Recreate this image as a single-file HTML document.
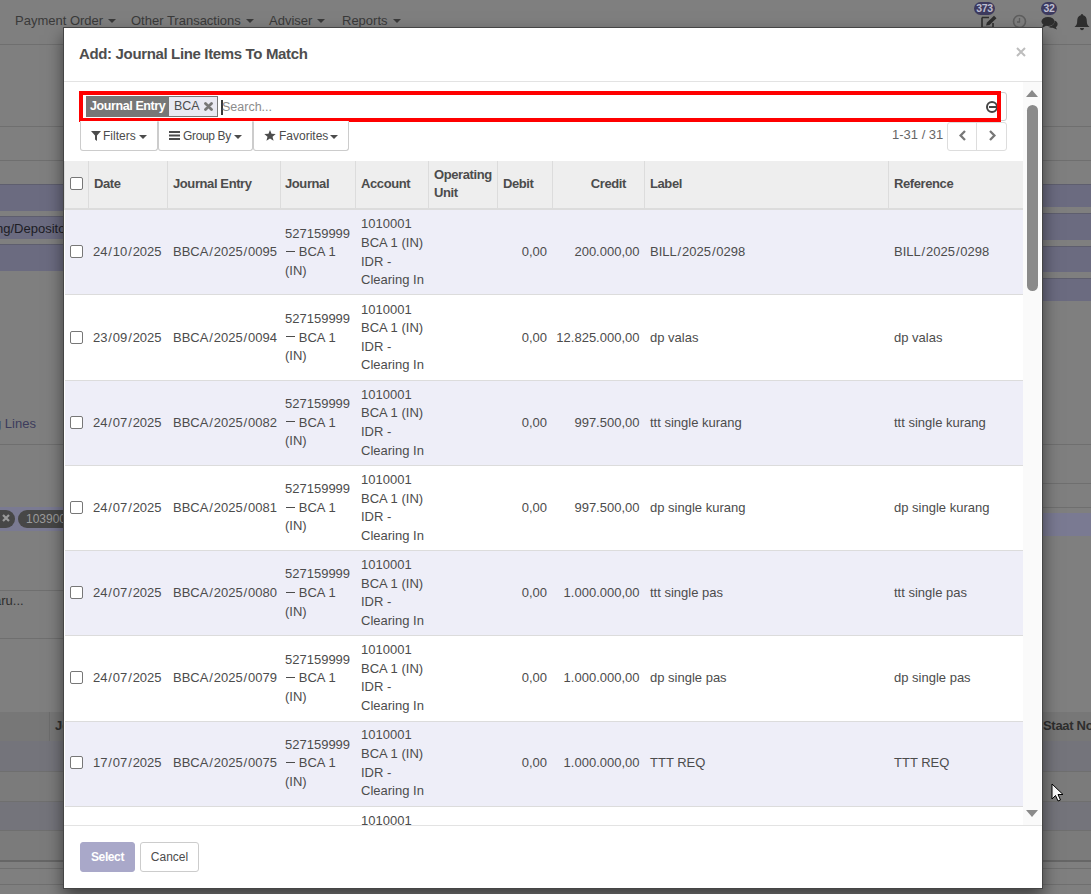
<!DOCTYPE html>
<html><head><meta charset="utf-8">
<style>
*{box-sizing:border-box;margin:0;padding:0}
html,body{width:1091px;height:894px;overflow:hidden}
body{position:relative;background:#7f7f7f;font-family:"Liberation Sans",sans-serif;font-size:13px;color:#4c4c4c;--odd:#eeeef8}
div,span,i,svg{position:absolute}
.bgline{left:0;width:1091px;height:1px;background:#6f6f6f}
.nav span{position:absolute;top:13px;color:#3a3a3a;font-size:13px;white-space:nowrap}
.caret{width:0;height:0;border-left:4px solid transparent;border-right:4px solid transparent;border-top:4px solid currentColor}
.nav .caret{position:relative;top:-1px;display:inline-block;vertical-align:middle;margin-left:5px;color:#3a3a3a}
.modal{left:63px;top:27px;width:980px;height:862px;background:#fff;border:1px solid #454545;box-shadow:0 8px 16px rgba(0,0,0,.5)}
.mhead{left:64px;top:81px;width:978px;height:1px;background:#e3e3e3}
.mtitle{left:79px;top:45px;letter-spacing:-0.35px;font-size:15px;font-weight:bold;color:#4e4e4e;white-space:nowrap}
.mclose{left:1016px;top:47px}
.bodyclip{left:0;top:0;width:1023px;height:825px;clip-path:inset(82px 0 0 64px)}
.row{left:65px;width:958px;border-bottom:1px solid #dcdcdc}
.t{white-space:nowrap;line-height:18.6px;font-size:13px;color:#4c4c4c}
.cb{width:13px;height:13px;border:1px solid #777;border-radius:2px;background:#fff}
.thead{left:64px;top:161px;width:959px;height:49px;background:#eee;border-left:1px solid #ddd;border-bottom:2px solid #dcdcdc}
.hd{top:161px;width:1px;height:47px;background:#dcdcdc}
.th{letter-spacing:-0.4px;white-space:nowrap;line-height:18.6px;font-weight:bold;color:#4c4c4c}
.sbox{left:80px;top:92px;width:927px;height:29px;border:1px solid #ccc;border-radius:3px;background:#fff}
.facet-l{left:86px;top:96px;width:83px;height:21px;background:#777;color:#fff;line-height:21px;padding-left:4px;white-space:nowrap;font-weight:bold;font-size:12.5px;letter-spacing:-0.4px}
.facet-v{left:169px;top:96px;width:49px;height:21px;background:#e9e9f2;border:1px solid #777;border-left:0;line-height:19px;padding-left:5px;white-space:nowrap;color:#4c4c4c;font-size:12.5px}
.fx{left:35px;top:5px}
.cursor{left:221px;top:100px;width:2px;height:15px;background:#3a3a3a}
.ph{left:222px;top:100px;color:#8c8c8c;line-height:15px;font-size:12.5px}
.clr{left:986px;top:101px;width:12px;height:12px;border:2px solid #444;border-radius:50%}
.clr:after{content:"";position:absolute;left:1px;top:3px;width:7px;height:2px;background:#444}
.redframe{left:79px;top:91px;width:922px;height:31px;border:4px solid #f00}
.fbtn{top:121px;height:30px;border:1px solid #ccc;border-top-color:transparent;border-radius:0 0 3px 3px;background:#fff;color:#4c4c4c}
.fbt{top:129px;font-size:12px;white-space:nowrap;color:#4c4c4c}
.caret{top:135px;color:#4c4c4c}
.pager{left:892px;top:127px;white-space:nowrap;color:#666}
.pbtn{top:122px;height:29px;border:1px solid #ddd;border-radius:3px;background:#fff}
.sbar{left:1023px;top:82px;width:18px;height:743px;background:#fafafa}
.sthumb{left:1027px;top:105px;width:11px;height:186px;background:#8a8a8a;border-radius:6px}
.sup{left:1026px;top:90px;width:0;height:0;border-left:6.5px solid transparent;border-right:6.5px solid transparent;border-bottom:7px solid #8a8a8a}
.sdown{left:1026px;top:810px;width:0;height:0;border-left:6.5px solid transparent;border-right:6.5px solid transparent;border-top:7px solid #8a8a8a}
.mfoot{left:64px;top:825px;width:978px;height:1px;background:#e3e3e3}
.btn{top:842px;height:30px;border-radius:3px;line-height:28px;text-align:center;font-size:12px}

.sl{padding:0 0.87px}
.pband{background:#6b6b80;border-top:1px solid #5e5e6e}
.pband2{background:#7a7a92}
.bgtxt{white-space:nowrap;font-size:13px}
.pill{height:18px;border-radius:9px;background:#474747;font-size:12px;line-height:18px;white-space:nowrap;overflow:hidden}
.bgrow{left:0;width:1091px}
.badge{top:2px;height:13px;border-radius:7px;background:#3d3a5e;color:#bdbdd0;font-weight:bold;letter-spacing:-0.3px;font-size:10.5px;line-height:13px;text-align:center}

.dash{position:static;display:inline-block;width:9.3px;height:1.3px;background:transparent;vertical-align:4px;margin:0 3.9px 0 0.6px}
.dline{width:9.3px;height:1px;background:#4c4c4c}

</style></head>
<body>
<div class="nav">
  <span style="left:15px">Payment Order<i class="caret"></i></span>
  <span style="left:131px">Other Transactions<i class="caret"></i></span>
  <span style="left:269px">Adviser<i class="caret"></i></span>
  <span style="left:342px">Reports<i class="caret"></i></span>
</div>
<div class="badge" style="left:974px;width:21px">373</div>
<div class="badge" style="left:1041px;width:16px">32</div>
<svg width="18" height="14" viewBox="0 0 18 14" style="left:980px;top:15px"><path d="M2 2.5H9M2 2.5V12.5H13V8" stroke="#2e2e2e" stroke-width="1.6" fill="none"/><path d="M6 10.5L7 7.5L14 0.8L16.5 3.2L9.5 10Z" fill="#2e2e2e"/></svg>
<svg width="16" height="16" viewBox="0 0 16 16" style="left:1012px;top:14px"><circle cx="7.5" cy="7.5" r="6" stroke="#5e5e5e" stroke-width="1.6" fill="none"/><path d="M7.5 4V8H5" stroke="#5e5e5e" stroke-width="1.3" fill="none"/></svg>
<svg width="18" height="14" viewBox="0 0 18 14" style="left:1041px;top:16px"><ellipse cx="7" cy="5.5" rx="6.5" ry="4.6" fill="#2e2e2e"/><path d="M2 8.5L1 12L5.5 9.5Z" fill="#2e2e2e"/><path d="M13.5 4.5C16 5.5 17 7 16.5 9C16.2 10.2 15.5 10.8 14.8 11.2L16 13.5L11.5 11.8C9.5 11.8 8 11.3 7 10.5C11 10.5 14 8 13.5 4.5Z" fill="#2e2e2e"/></svg>
<svg width="16" height="18" viewBox="0 0 16 18" style="left:1074px;top:13px"><path d="M8 1C9 1 9.2 1.8 9.2 2.3C11.8 3 12.8 5.2 12.8 8C12.8 11 13.5 12.5 15.5 14H0.5C2.5 12.5 3.2 11 3.2 8C3.2 5.2 4.2 3 6.8 2.3C6.8 1.8 7 1 8 1Z" fill="#2e2e2e"/><path d="M6 15H10C10 16.4 9.1 17.2 8 17.2C6.9 17.2 6 16.4 6 15Z" fill="#2e2e2e"/></svg>

<div class="bgline" style="top:44px"></div>
<div class="bgline" style="top:126px"></div>
<div class="bgline" style="top:160px"></div>
<!-- left bands -->
<div class="pband" style="left:0;width:64px;top:184px;height:27px"></div>
<div class="pband" style="left:0;width:64px;top:216px;height:23px"></div>
<div class="pband" style="left:0;width:64px;top:244px;height:27px"></div>
<div class="bgtxt" style="left:-4px;top:221px;color:#1c1c24;font-size:13px">ng/Deposito</div>
<!-- right bands -->
<div class="pband" style="left:1042px;width:49px;top:184px;height:23px"></div>
<div class="pband" style="left:1042px;width:49px;top:213px;height:27px"></div>
<div class="pband" style="left:1042px;width:49px;top:246px;height:26px"></div>
<div class="pband" style="left:1042px;width:49px;top:278px;height:23px"></div>

<div class="bgtxt" style="left:-6px;top:416px;color:#3c3c5c;font-size:13px">g Lines</div>
<div class="bgline" style="top:444px"></div>
<div class="bgline" style="left:1042px;width:49px;top:483px"></div>
<div class="bgline" style="left:1042px;width:49px;top:507px"></div>
<div class="pband2" style="left:0;width:64px;top:507px;height:24px"></div>
<div class="pband2" style="left:1042px;width:49px;top:513px;height:23px"></div>
<div class="pill" style="left:-20px;width:35px;top:510px"><svg width="8" height="8" viewBox="0 0 8 8" style="left:22px;top:4px"><path d="M1 1L7 7M7 1L1 7" stroke="#9a9a9a" stroke-width="2.2"/></svg></div>
<div class="pill" style="left:18px;width:80px;top:510px;padding-left:8px;color:#9c9c9c">103900</div>
<div class="bgline" style="left:0;width:64px;top:590px"></div>
<div class="bgtxt" style="left:-6px;top:593px;color:#2e2e2e;font-size:13px">aru...</div>
<div class="bgline" style="left:0;width:64px;top:638px"></div>

<div class="bgrow" style="top:712px;height:29px;background:#777"></div>
<div style="left:49px;top:712px;width:1px;height:29px;background:#6e6e6e"></div>
<div class="bgtxt" style="left:55px;top:718px;font-weight:bold;color:#2e2e2e">Jo</div>
<div class="bgtxt" style="left:1043px;top:718px;font-weight:bold;color:#2e2e2e;letter-spacing:-0.3px">Staat No</div>
<div class="bgrow" style="top:741px;height:30px;background:#74747b"></div>
<div class="bgrow" style="top:771px;height:30px;background:#7b7b7b"></div>
<div class="bgrow" style="top:801px;height:29px;background:#74747b"></div>
<div class="bgrow" style="top:830px;height:30px;background:#7b7b7b"></div>
<div class="bgline" style="top:771px"></div>
<div class="bgline" style="top:801px"></div>
<div class="bgline" style="top:830px"></div>
<div class="bgline" style="top:860px;height:2px;background:#666"></div>
<div class="bgline" style="top:868px"></div>
<div class="bgline" style="top:884px"></div>
<svg width="14" height="20" viewBox="0 0 14 20" style="left:1051px;top:783px"><path d="M1 1V16L4.5 12.5L7 18L9.5 17L7 11.5H12Z" fill="#fff" stroke="#000" stroke-width="1"/></svg>

<div class="modal"></div>
<div class="mhead"></div>
<div class="mtitle">Add: Journal Line Items To Match</div>
<svg class="mclose" width="10" height="10" viewBox="0 0 10 10"><path d="M1 1L9 9M9 1L1 9" stroke="#bdbdbd" stroke-width="2"/></svg>
<div class="bodyclip">
<div class="row" style="top:210px;height:85px;background:var(--odd)"></div>
<div class="cb" style="left:70px;top:245px"></div>
<div class="t" style="left:93px;top:243.35px">24<span class="sl" style="position:static">/</span>10<span class="sl" style="position:static">/</span>2025</div>
<div class="t" style="left:173px;top:243.35px">BBCA<span class="sl" style="position:static">/</span>2025<span class="sl" style="position:static">/</span>0095</div>
<div class="t" style="left:285px;top:224.75px">527159999<br><span class="dash"></span>BCA 1<br>(IN)</div>
<div class="dline" style="left:285.6px;top:251px"></div>
<div class="t" style="left:361px;top:215.45px">1010001<br>BCA 1 (IN)<br>IDR -<br>Clearing In</div>
<div class="t r" style="right:476px;top:243.35px">0,00</div>
<div class="t r" style="right:383.5px;top:243.35px">200.000,00</div>
<div class="t" style="left:650px;top:243.35px">BILL<span class="sl" style="position:static">/</span>2025<span class="sl" style="position:static">/</span>0298</div>
<div class="t" style="left:894px;top:243.35px">BILL<span class="sl" style="position:static">/</span>2025<span class="sl" style="position:static">/</span>0298</div>
<div class="row" style="top:295px;height:86px;background:#fff"></div>
<div class="cb" style="left:70px;top:331px"></div>
<div class="t" style="left:93px;top:328.52px">23<span class="sl" style="position:static">/</span>09<span class="sl" style="position:static">/</span>2025</div>
<div class="t" style="left:173px;top:328.52px">BBCA<span class="sl" style="position:static">/</span>2025<span class="sl" style="position:static">/</span>0094</div>
<div class="t" style="left:285px;top:309.92px">527159999<br><span class="dash"></span>BCA 1<br>(IN)</div>
<div class="dline" style="left:285.6px;top:336px"></div>
<div class="t" style="left:361px;top:300.62px">1010001<br>BCA 1 (IN)<br>IDR -<br>Clearing In</div>
<div class="t r" style="right:476px;top:328.52px">0,00</div>
<div class="t r" style="right:383.5px;top:328.52px">12.825.000,00</div>
<div class="t" style="left:650px;top:328.52px">dp valas</div>
<div class="t" style="left:894px;top:328.52px">dp valas</div>
<div class="row" style="top:381px;height:85px;background:var(--odd)"></div>
<div class="cb" style="left:70px;top:416px"></div>
<div class="t" style="left:93px;top:413.69px">24<span class="sl" style="position:static">/</span>07<span class="sl" style="position:static">/</span>2025</div>
<div class="t" style="left:173px;top:413.69px">BBCA<span class="sl" style="position:static">/</span>2025<span class="sl" style="position:static">/</span>0082</div>
<div class="t" style="left:285px;top:395.09px">527159999<br><span class="dash"></span>BCA 1<br>(IN)</div>
<div class="dline" style="left:285.6px;top:421px"></div>
<div class="t" style="left:361px;top:385.79px">1010001<br>BCA 1 (IN)<br>IDR -<br>Clearing In</div>
<div class="t r" style="right:476px;top:413.69px">0,00</div>
<div class="t r" style="right:383.5px;top:413.69px">997.500,00</div>
<div class="t" style="left:650px;top:413.69px">ttt single kurang</div>
<div class="t" style="left:894px;top:413.69px">ttt single kurang</div>
<div class="row" style="top:466px;height:85px;background:#fff"></div>
<div class="cb" style="left:70px;top:501px"></div>
<div class="t" style="left:93px;top:498.86px">24<span class="sl" style="position:static">/</span>07<span class="sl" style="position:static">/</span>2025</div>
<div class="t" style="left:173px;top:498.86px">BBCA<span class="sl" style="position:static">/</span>2025<span class="sl" style="position:static">/</span>0081</div>
<div class="t" style="left:285px;top:480.26px">527159999<br><span class="dash"></span>BCA 1<br>(IN)</div>
<div class="dline" style="left:285.6px;top:507px"></div>
<div class="t" style="left:361px;top:470.96px">1010001<br>BCA 1 (IN)<br>IDR -<br>Clearing In</div>
<div class="t r" style="right:476px;top:498.86px">0,00</div>
<div class="t r" style="right:383.5px;top:498.86px">997.500,00</div>
<div class="t" style="left:650px;top:498.86px">dp single kurang</div>
<div class="t" style="left:894px;top:498.86px">dp single kurang</div>
<div class="row" style="top:551px;height:85px;background:var(--odd)"></div>
<div class="cb" style="left:70px;top:586px"></div>
<div class="t" style="left:93px;top:584.03px">24<span class="sl" style="position:static">/</span>07<span class="sl" style="position:static">/</span>2025</div>
<div class="t" style="left:173px;top:584.03px">BBCA<span class="sl" style="position:static">/</span>2025<span class="sl" style="position:static">/</span>0080</div>
<div class="t" style="left:285px;top:565.43px">527159999<br><span class="dash"></span>BCA 1<br>(IN)</div>
<div class="dline" style="left:285.6px;top:592px"></div>
<div class="t" style="left:361px;top:556.13px">1010001<br>BCA 1 (IN)<br>IDR -<br>Clearing In</div>
<div class="t r" style="right:476px;top:584.03px">0,00</div>
<div class="t r" style="right:383.5px;top:584.03px">1.000.000,00</div>
<div class="t" style="left:650px;top:584.03px">ttt single pas</div>
<div class="t" style="left:894px;top:584.03px">ttt single pas</div>
<div class="row" style="top:636px;height:86px;background:#fff"></div>
<div class="cb" style="left:70px;top:671px"></div>
<div class="t" style="left:93px;top:669.20px">24<span class="sl" style="position:static">/</span>07<span class="sl" style="position:static">/</span>2025</div>
<div class="t" style="left:173px;top:669.20px">BBCA<span class="sl" style="position:static">/</span>2025<span class="sl" style="position:static">/</span>0079</div>
<div class="t" style="left:285px;top:650.60px">527159999<br><span class="dash"></span>BCA 1<br>(IN)</div>
<div class="dline" style="left:285.6px;top:677px"></div>
<div class="t" style="left:361px;top:641.30px">1010001<br>BCA 1 (IN)<br>IDR -<br>Clearing In</div>
<div class="t r" style="right:476px;top:669.20px">0,00</div>
<div class="t r" style="right:383.5px;top:669.20px">1.000.000,00</div>
<div class="t" style="left:650px;top:669.20px">dp single pas</div>
<div class="t" style="left:894px;top:669.20px">dp single pas</div>
<div class="row" style="top:722px;height:85px;background:var(--odd)"></div>
<div class="cb" style="left:70px;top:756px"></div>
<div class="t" style="left:93px;top:754.37px">17<span class="sl" style="position:static">/</span>07<span class="sl" style="position:static">/</span>2025</div>
<div class="t" style="left:173px;top:754.37px">BBCA<span class="sl" style="position:static">/</span>2025<span class="sl" style="position:static">/</span>0075</div>
<div class="t" style="left:285px;top:735.77px">527159999<br><span class="dash"></span>BCA 1<br>(IN)</div>
<div class="dline" style="left:285.6px;top:762px"></div>
<div class="t" style="left:361px;top:726.47px">1010001<br>BCA 1 (IN)<br>IDR -<br>Clearing In</div>
<div class="t r" style="right:476px;top:754.37px">0,00</div>
<div class="t r" style="right:383.5px;top:754.37px">1.000.000,00</div>
<div class="t" style="left:650px;top:754.37px">TTT REQ</div>
<div class="t" style="left:894px;top:754.37px">TTT REQ</div>
<div class="row" style="top:807px;height:94px;background:#fff"></div>
<div class="t" style="left:361px;top:811.64px">1010001<br>BCA 1 (IN)<br>IDR -<br>Clearing In</div>
</div>
<div class="thead"></div>
<div class="hd" style="left:88px"></div>
<div class="hd" style="left:167px"></div>
<div class="hd" style="left:280px"></div>
<div class="hd" style="left:355px"></div>
<div class="hd" style="left:428px"></div>
<div class="hd" style="left:497px"></div>
<div class="hd" style="left:552px"></div>
<div class="hd" style="left:644px"></div>
<div class="hd" style="left:888px"></div>
<div class="cb" style="left:70px;top:177px"></div>
<div class="th" style="left:94px;top:175.2px">Date</div>
<div class="th" style="left:173px;top:175.2px">Journal Entry</div>
<div class="th" style="left:285px;top:175.2px">Journal</div>
<div class="th" style="left:361px;top:175.2px">Account</div>
<div class="th" style="left:434px;top:165.9px">Operating<br>Unit</div>
<div class="th" style="left:503px;top:175.2px">Debit</div>
<div class="th r" style="right:465px;top:175.2px">Credit</div>
<div class="th" style="left:650px;top:175.2px">Label</div>
<div class="th" style="left:894px;top:175.2px">Reference</div>

<div class="sbox"></div>
<div class="facet-l">Journal Entry</div>
<div class="facet-v">BCA<svg class="fx" width="9" height="9" viewBox="0 0 9 9"><path d="M1.5 1.5L7.5 7.5M7.5 1.5L1.5 7.5" stroke="#777" stroke-width="2.8" stroke-linecap="round"/></svg></div>
<div class="cursor"></div>
<div class="ph">Search...</div>
<div class="clr"></div>
<div class="redframe"></div>

<div class="fbtn" style="left:80px;width:78px"></div>
<div class="fbtn" style="left:158px;width:95px"></div>
<div class="fbtn" style="left:253px;width:96px"></div>
<svg class="ic" width="10" height="10" viewBox="0 0 10 10" style="left:91px;top:131px"><path d="M0 0H10L6 4.5V10L4 8.5V4.5Z" fill="#4c4c4c"/></svg>
<div class="fbt" style="left:103px">Filters</div><i class="caret" style="left:139px"></i>
<svg class="ic" width="11" height="9" viewBox="0 0 11 9" style="left:169px;top:131px"><rect y="0" width="11" height="2" fill="#4c4c4c"/><rect y="3.5" width="11" height="2" fill="#4c4c4c"/><rect y="7" width="11" height="2" fill="#4c4c4c"/></svg>
<div class="fbt" style="left:183px;letter-spacing:-0.35px">Group By</div><i class="caret" style="left:234px"></i>
<svg class="ic" width="12" height="11" viewBox="0 0 12 11.4" style="left:264px;top:130px"><path d="M6 0L7.6 3.9L11.9 4.2L8.6 6.9L9.7 11.1L6 8.8L2.3 11.1L3.4 6.9L0.1 4.2L4.4 3.9Z" fill="#4c4c4c"/></svg>
<div class="fbt" style="left:279px">Favorites</div><i class="caret" style="left:330px"></i>

<div class="pager">1-31 / 31</div>
<div class="pbtn" style="left:947px;width:60px"></div>
<div style="left:976px;top:122px;width:1px;height:29px;background:#ddd"></div>
<svg width="10" height="11" viewBox="0 0 10 11" style="left:958px;top:130px"><path d="M7 1L2.6 5.5L7 10" stroke="#777" stroke-width="2.3" fill="none"/></svg>
<svg width="10" height="11" viewBox="0 0 10 11" style="left:987px;top:130px"><path d="M3 1L7.4 5.5L3 10" stroke="#777" stroke-width="2.3" fill="none"/></svg>

<div class="sbar"></div>
<div class="sthumb"></div>
<div class="sup"></div>
<div class="sdown"></div>

<div class="mfoot"></div>
<div class="btn" style="left:80px;width:55px;background:#a9a8c9;color:#fff;border:1px solid #a9a8c9;font-weight:bold;letter-spacing:-0.4px">Select</div>
<div class="btn" style="left:140px;width:59px;background:#fff;border:1px solid #ccc;color:#4c4c4c">Cancel</div>
</body></html>
